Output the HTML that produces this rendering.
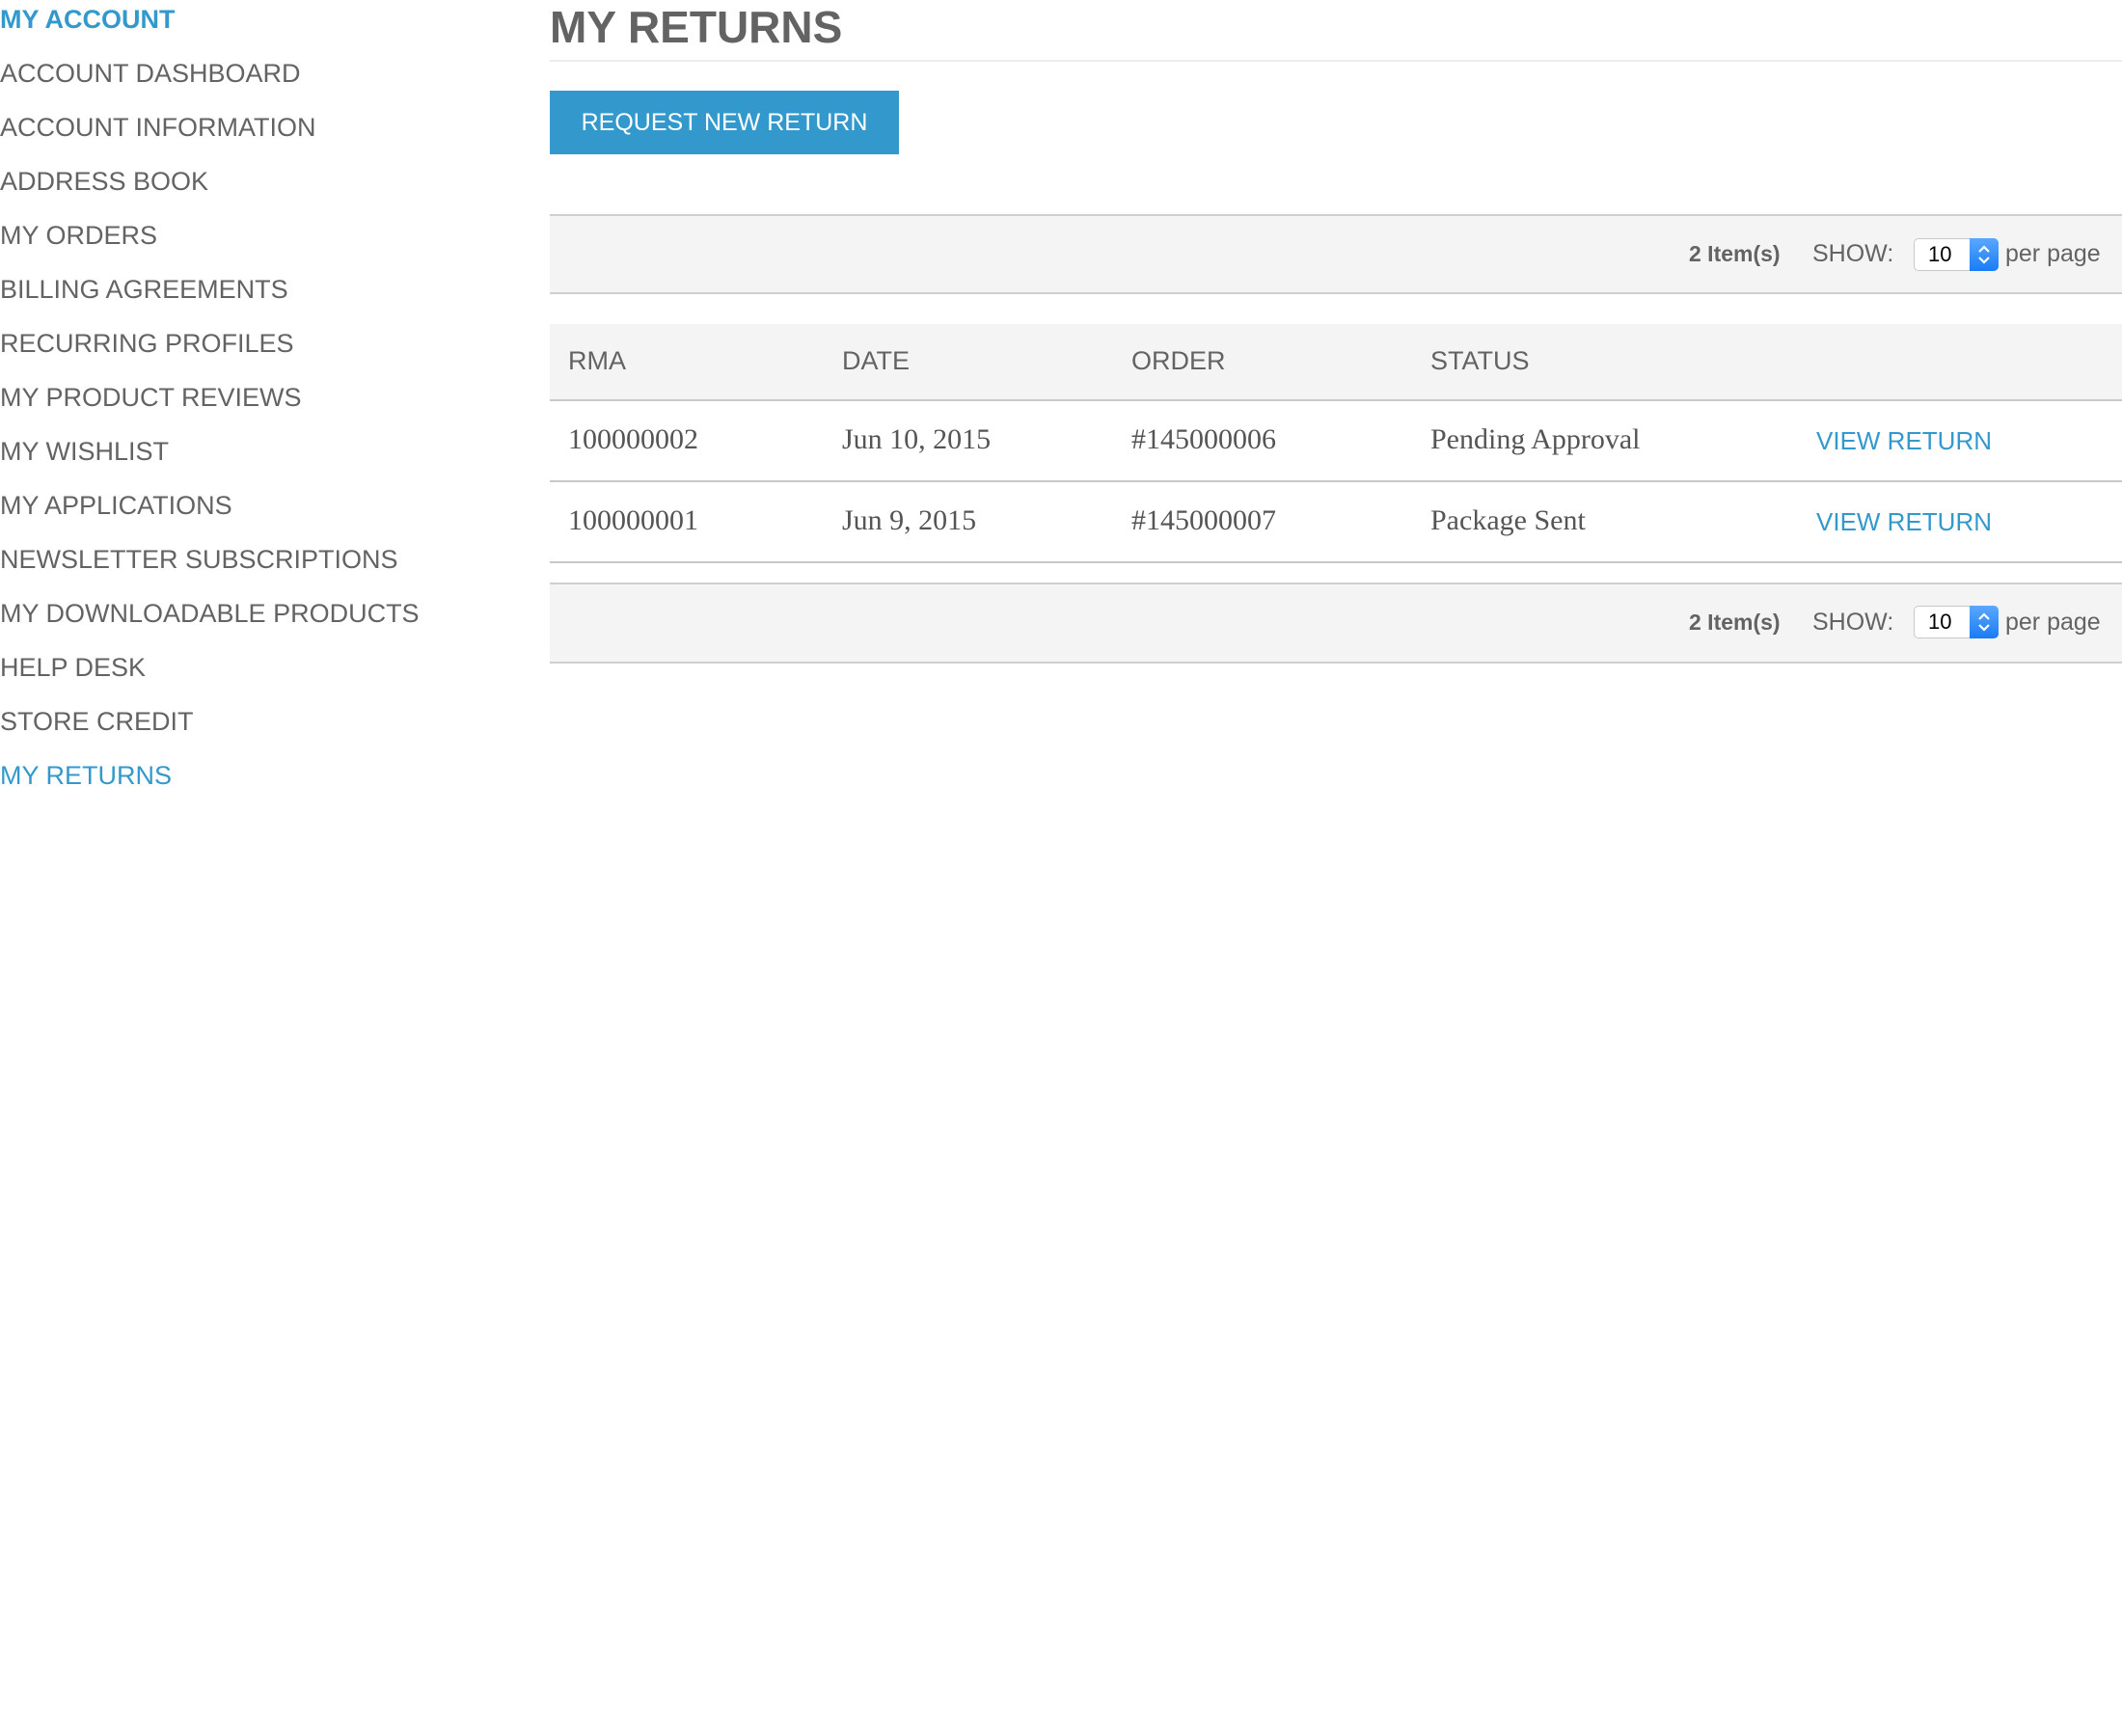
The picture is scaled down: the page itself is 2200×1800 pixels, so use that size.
<!DOCTYPE html>
<html><head><meta charset="utf-8"><style>
*{margin:0;padding:0;box-sizing:border-box}
body{width:2200px;height:1800px;background:#fff;position:relative;overflow:hidden;font-family:"Liberation Sans",sans-serif;color:#636363}
.a{position:absolute;white-space:nowrap}
.nav{font-size:27px;line-height:56px;left:0;top:-8px}
.nav div{height:56px}
.blue{color:#3399cc}
.bar{position:absolute;left:570px;right:0;background:#f4f4f4;border-top:2px solid #cfcfcf;border-bottom:2px solid #cfcfcf}
.row{position:absolute;left:570px;right:0;border-bottom:2px solid #c8c8c8}
.serif{font-family:"Liberation Serif",serif;font-size:30px;color:#555}
.sel{position:absolute;width:88px;height:34px;border:1px solid #c8c8c8;border-radius:5px;background:#fff;font-size:22px;color:#000;padding-left:14px;line-height:32px}
.sel i{position:absolute;right:-1px;top:-1px;width:30px;height:34px;background:linear-gradient(#5aa8ff,#1a7cf5);border-radius:0 5px 5px 0}
</style></head><body>
<div class="a nav">
<div class="blue" style="font-weight:bold;font-size:27px">MY ACCOUNT</div>
<div>ACCOUNT DASHBOARD</div>
<div>ACCOUNT INFORMATION</div>
<div>ADDRESS BOOK</div>
<div>MY ORDERS</div>
<div>BILLING AGREEMENTS</div>
<div>RECURRING PROFILES</div>
<div>MY PRODUCT REVIEWS</div>
<div>MY WISHLIST</div>
<div>MY APPLICATIONS</div>
<div>NEWSLETTER SUBSCRIPTIONS</div>
<div>MY DOWNLOADABLE PRODUCTS</div>
<div>HELP DESK</div>
<div>STORE CREDIT</div>
<div class="blue">MY RETURNS</div>
</div>
<div class="a" style="left:570px;top:0;font-size:46px;line-height:56px;font-weight:bold;color:#636363">MY RETURNS</div>
<div class="a" style="left:570px;right:0;top:62px;height:2px;background:#ececec"></div>
<div class="a" style="left:570px;top:94px;width:362px;height:66px;background:#3399cc;color:#fff;font-size:25px;line-height:66px;text-align:center">REQUEST NEW RETURN</div>

<div class="bar" style="top:222px;height:83px"></div>
<div class="a" style="left:1751px;top:248px;font-size:23px;line-height:30px;font-weight:bold">2 Item(s)</div>
<div class="a" style="left:1879px;top:248px;font-size:25px;line-height:30px">SHOW:</div>
<div class="sel" style="left:1984px;top:247px">10<i><svg width="30" height="34"><path d="M10 14l5-5 5 5M10 20l5 5 5-5" stroke="#fff" stroke-width="2.2" fill="none"/></svg></i></div>
<div class="a" style="left:2079px;top:248px;font-size:25px;line-height:30px">per page</div>

<div class="row" style="top:336px;height:80px;background:#f4f4f4"></div>
<div class="a" style="left:589px;top:356px;font-size:27px;line-height:36px">RMA</div>
<div class="a" style="left:873px;top:356px;font-size:27px;line-height:36px">DATE</div>
<div class="a" style="left:1173px;top:356px;font-size:27px;line-height:36px">ORDER</div>
<div class="a" style="left:1483px;top:356px;font-size:27px;line-height:36px">STATUS</div>

<div class="row" style="top:416px;height:84px"></div>
<div class="a serif" style="left:589px;top:438px;line-height:36px">100000002</div>
<div class="a serif" style="left:873px;top:438px;line-height:36px">Jun 10, 2015</div>
<div class="a serif" style="left:1173px;top:438px;line-height:36px">#145000006</div>
<div class="a serif" style="left:1483px;top:438px;line-height:36px">Pending Approval</div>
<div class="a blue" style="left:1883px;top:439px;font-size:26px;line-height:36px">VIEW RETURN</div>

<div class="row" style="top:500px;height:84px"></div>
<div class="a serif" style="left:589px;top:522px;line-height:36px">100000001</div>
<div class="a serif" style="left:873px;top:522px;line-height:36px">Jun 9, 2015</div>
<div class="a serif" style="left:1173px;top:522px;line-height:36px">#145000007</div>
<div class="a serif" style="left:1483px;top:522px;line-height:36px">Package Sent</div>
<div class="a blue" style="left:1883px;top:523px;font-size:26px;line-height:36px">VIEW RETURN</div>

<div class="bar" style="top:604px;height:84px"></div>
<div class="a" style="left:1751px;top:630px;font-size:23px;line-height:30px;font-weight:bold">2 Item(s)</div>
<div class="a" style="left:1879px;top:630px;font-size:25px;line-height:30px">SHOW:</div>
<div class="sel" style="left:1984px;top:628px">10<i><svg width="30" height="34"><path d="M10 14l5-5 5 5M10 20l5 5 5-5" stroke="#fff" stroke-width="2.2" fill="none"/></svg></i></div>
<div class="a" style="left:2079px;top:630px;font-size:25px;line-height:30px">per page</div>
</body></html>
